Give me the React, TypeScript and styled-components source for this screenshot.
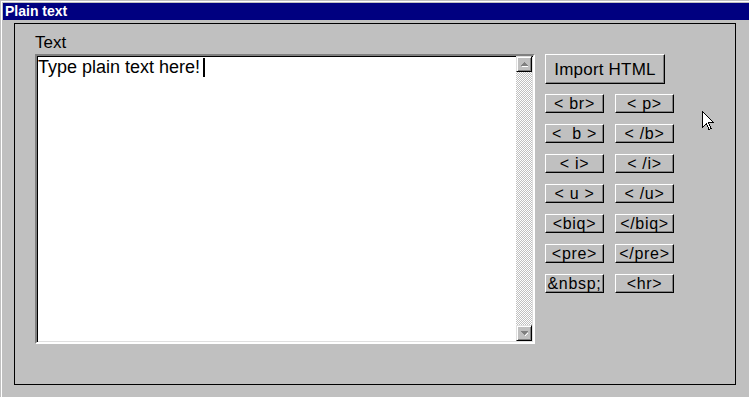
import React, { ReactElement } from "react";
import styled, { createGlobalStyle } from "styled-components";

const GlobalStyle = createGlobalStyle`
    html, body {
        margin: 0;
        padding: 0;
        background: #c0c0c0;
    }
    body {
        font-family: "Liberation Sans", Arial, sans-serif;
    }
`;

const Window = styled.div`
    position: relative;
    width: 749px;
    height: 397px;
    box-sizing: border-box;
    padding: 3px 0 0 3px;
    background: #c0c0c0;
    box-shadow: inset 1px 1px #c0c0c0, inset 2px 2px #ffffff;
    overflow: hidden;
`;

const TitleBar = styled.div`
    height: 17px;
    background: #000080;
    color: #ffffff;
    font-weight: bold;
    font-size: 14px;
    line-height: 16px;
    padding-left: 2px;
    margin-bottom: 3px;
`;

const Frame = styled.div`
    margin-left: 11px;
    width: 722px;
    height: 362px;
    box-sizing: border-box;
    border: 1px solid #000000;
    padding: 10px 0 0 20px;
    display: grid;
    grid-template-columns: 500px 130px;
    grid-template-rows: 18px 290px;
    column-gap: 10px;
    row-gap: 2px;
`;

const Label = styled.div`
    grid-column: 1;
    font-size: 17px;
    line-height: 18px;
    color: #000000;
`;

const TextBox = styled.div`
    grid-column: 1;
    grid-row: 2;
    box-sizing: border-box;
    border: 2px solid;
    border-color: #808080 #ffffff #ffffff #808080;
    box-shadow: inset 1px 1px #000000, inset -1px -1px #dfdfdf;
    background: #ffffff;
    display: flex;
`;

const TextArea = styled.div`
    flex: 1;
    padding: 1px 0 0 1px;
    font-size: 18px;
    line-height: 20px;
    color: #000000;
    white-space: pre;
`;

const Caret = styled.span`
    display: inline-block;
    width: 2px;
    height: 19px;
    background: #000000;
    margin-left: 3px;
    vertical-align: -4px;
`;

const ScrollBar = styled.div`
    width: 16px;
    margin: 0 1px 1px 0;
    display: flex;
    flex-direction: column;
    background-image: repeating-conic-gradient(#c0c0c0 0 25%, #ffffff 0 50%);
    background-size: 2px 2px;
`;

const ScrollTrack = styled.div`
    flex: 1;
`;

const ArrowButton = styled.div`
    width: 16px;
    height: 16px;
    box-sizing: border-box;
    background: #c0c0c0;
    border: 1px solid;
    border-color: #dfdfdf #000000 #000000 #dfdfdf;
    box-shadow: inset 1px 1px #ffffff, inset -1px -1px #808080;
    display: flex;
    align-items: center;
    justify-content: center;
`;

const Side = styled.div`
    grid-column: 2;
    grid-row: 2;
    display: flex;
    flex-direction: column;
    align-items: flex-start;
`;

const RaisedButton = styled.button<{ $big?: boolean }>`
    box-sizing: border-box;
    width: ${(p) => (p.$big ? "120px" : "59px")};
    height: ${(p) => (p.$big ? "30px" : "19px")};
    padding: 0;
    margin: 0;
    background: #c0c0c0;
    color: #000000;
    font-family: "Liberation Sans", Arial, sans-serif;
    font-size: ${(p) => (p.$big ? "17px" : "16px")};
    letter-spacing: ${(p) => (p.$big ? "0.2px" : "0.7px")};
    line-height: 1;
    border: 1px solid;
    border-color: #ffffff #000000 #000000 #ffffff;
    box-shadow: inset -1px -1px #808080;
    white-space: pre;
    display: flex;
    align-items: center;
    justify-content: center;
`;

const TagGrid = styled.div`
    margin-top: 10px;
    display: grid;
    grid-template-columns: 59px 59px;
    column-gap: 11px;
    row-gap: 11px;
`;

const Pointer = styled.svg`
    position: absolute;
    left: 702px;
    top: 111px;
`;

const tags: string[][] = [
    ["< br>", "< p>"],
    ["<  b >", "< /b>"],
    ["< i>", "< /i>"],
    ["< u >", "< /u>"],
    ["<biq>", "</biq>"],
    ["<pre>", "</pre>"],
    ["&nbsp;", "<hr>"],
];

const Triangle = ({ up }: { up: boolean }): ReactElement => (
    <svg width="7" height="5" viewBox="0 0 7 5" shapeRendering="crispEdges">
        {up ? (
            <>
                <path d="M1 4 H7 V5 H1 Z" fill="#ffffff" />
                <path d="M3 0 H4 V1 H5 V2 H6 V3 H7 V4 H0 V3 H1 V2 H2 V1 H3 Z" fill="#808080" />
            </>
        ) : (
            <>
                <path d="M4 4 H5 V5 H4 Z M5 3 H6 V4 H5 Z M6 2 H7 V3 H6 Z" fill="#ffffff" />
                <path d="M0 0 H7 V1 H6 V2 H5 V3 H4 V4 H3 V3 H2 V2 H1 V1 H0 Z" fill="#808080" />
            </>
        )}
    </svg>
);

const App = (): ReactElement => {
    return (
        <>
            <GlobalStyle />
            <Window>
                <TitleBar>Plain text</TitleBar>
                <Frame>
                    <Label>Text</Label>
                    <TextBox>
                        <TextArea>
                            Type plain text here!<Caret />
                        </TextArea>
                        <ScrollBar>
                            <ArrowButton>
                                <Triangle up={true} />
                            </ArrowButton>
                            <ScrollTrack />
                            <ArrowButton>
                                <Triangle up={false} />
                            </ArrowButton>
                        </ScrollBar>
                    </TextBox>
                    <Side>
                        <RaisedButton $big>Import HTML</RaisedButton>
                        <TagGrid>
                            {tags.map((row) =>
                                row.map((t) => <RaisedButton key={t}>{t}</RaisedButton>)
                            )}
                        </TagGrid>
                    </Side>
                </Frame>
                <Pointer width="12" height="20" viewBox="0 0 12 20" shapeRendering="crispEdges">
                    <path
                        d="M0.5 0.5 V16.5 L4.5 12.5 L7 18.5 L9 17.5 L6.5 11.5 H11.5 Z"
                        fill="#ffffff"
                        stroke="#000000"
                        strokeWidth="1"
                    />
                </Pointer>
            </Window>
        </>
    );
};

export default App;
